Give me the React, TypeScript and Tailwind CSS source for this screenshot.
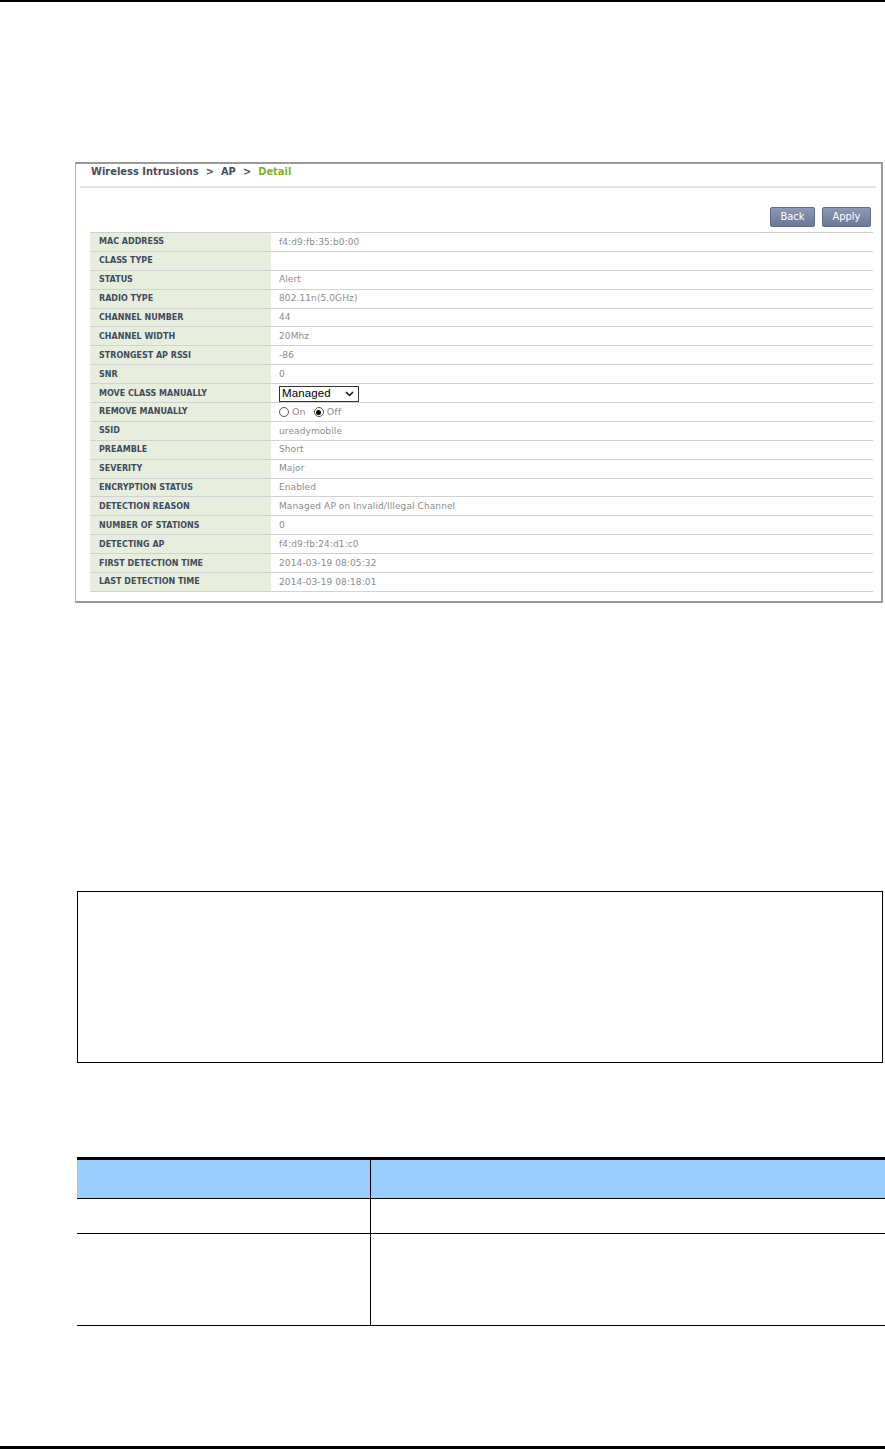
import React from 'react';

const rows: { label: string; value?: string; kind?: 'select' | 'radio' }[] = [
  { label: 'MAC ADDRESS', value: 'f4:d9:fb:35:b0:00' },
  { label: 'CLASS TYPE', value: '' },
  { label: 'STATUS', value: 'Alert' },
  { label: 'RADIO TYPE', value: '802.11n(5.0GHz)' },
  { label: 'CHANNEL NUMBER', value: '44' },
  { label: 'CHANNEL WIDTH', value: '20Mhz' },
  { label: 'STRONGEST AP RSSI', value: '-86' },
  { label: 'SNR', value: '0' },
  { label: 'MOVE CLASS MANUALLY', kind: 'select' },
  { label: 'REMOVE MANUALLY', kind: 'radio' },
  { label: 'SSID', value: 'ureadymobile' },
  { label: 'PREAMBLE', value: 'Short' },
  { label: 'SEVERITY', value: 'Major' },
  { label: 'ENCRYPTION STATUS', value: 'Enabled' },
  { label: 'DETECTION REASON', value: 'Managed AP on Invalid/Illegal Channel' },
  { label: 'NUMBER OF STATIONS', value: '0' },
  { label: 'DETECTING AP', value: 'f4:d9:fb:24:d1:c0' },
  { label: 'FIRST DETECTION TIME', value: '2014-03-19 08:05:32' },
  { label: 'LAST DETECTION TIME', value: '2014-03-19 08:18:01' },
];

function ManagedSelect() {
  return (
    <div className="flex items-center justify-between w-[80px] h-[16px] border border-[#333] bg-white pl-[2px] pr-[4px] text-[11.5px] text-black leading-none font-['Liberation_Sans',Arial,sans-serif]">
      <span>Managed</span>
      <svg width="9" height="6" viewBox="0 0 9 6">
        <polyline points="1,1 4.5,4.5 8,1" fill="none" stroke="#111" strokeWidth="1.5" />
      </svg>
    </div>
  );
}

function Radio({ checked, label }: { checked?: boolean; label: string }) {
  return (
    <span className="flex items-center gap-[3px]">
      <span className="flex items-center justify-center w-[10px] h-[10px] rounded-full border border-[#555] bg-white">
        {checked && <span className="w-[5px] h-[5px] rounded-full bg-black" />}
      </span>
      <span>{label}</span>
    </span>
  );
}

export default function App() {
  return (
    <div className="relative w-[885px] h-[1449px] bg-white overflow-hidden">
      <div className="h-[2px] bg-black" />

      {/* screenshot of the detail page */}
      <div className="mt-[160px] ml-[75px] w-[808px] border-l border-t-2 border-r-2 border-b-2 border-[#9a9a9a] border-l-[#b0b0b0]">
        <div className="h-[17px] pl-[15px] flex items-center gap-[7px] text-[11px] font-bold text-[#4b4b5c] font-['DejaVu_Sans_Condensed','DejaVu_Sans',sans-serif]">
          <span>Wireless Intrusions</span>
          <span className="text-[#555]">&gt;</span>
          <span>AP</span>
          <span className="text-[#555]">&gt;</span>
          <span className="text-[#7ab42c]">Detail</span>
        </div>
        <div className="mt-[5px] ml-[4px] mr-[5px] h-[2px] bg-[#e6e6e6]" />

        <div className="mt-[19px] pr-[10px] flex justify-end gap-[7px]">
          <button className="w-[45px] h-[20px] rounded-[2px] border border-[#5d6b88] bg-gradient-to-b from-[#8d9ab6] to-[#6b7896] text-white text-[11px] font-['DejaVu_Sans_Condensed','DejaVu_Sans',sans-serif]">
            Back
          </button>
          <button className="w-[49px] h-[20px] rounded-[2px] border border-[#5d6b88] bg-gradient-to-b from-[#8d9ab6] to-[#6b7896] text-white text-[11px] font-['DejaVu_Sans_Condensed','DejaVu_Sans',sans-serif]">
            Apply
          </button>
        </div>

        <div className="mt-[5px] ml-[14px] mr-[8px] mb-[9px] border-t border-[#cfcfcf]">
          {rows.map((r) => (
            <div key={r.label} className="flex h-[18.9px] border-b border-[#d2d2d2]">
              <div className="w-[181px] shrink-0 bg-[#e7eedd] pl-[9px] pt-[1px] flex items-center text-[8px] font-bold text-[#3f4b5e] font-['DejaVu_Sans',sans-serif]">
                {r.label}
              </div>
              <div className="flex-1 pl-[8px] pt-[1px] flex items-center text-[9px] tracking-[0.1px] text-[#8c8c8c] font-['DejaVu_Sans',sans-serif]">
                {r.kind === 'select' ? (
                  <ManagedSelect />
                ) : r.kind === 'radio' ? (
                  <div className="flex items-center gap-[8px] text-[9.5px]">
                    <Radio label="On" />
                    <Radio checked label="Off" />
                  </div>
                ) : (
                  r.value
                )}
              </div>
            </div>
          ))}
        </div>
      </div>

      {/* empty framed box */}
      <div className="mt-[288px] ml-[77px] w-[806px] h-[172px] border border-black" />

      {/* empty parameter table */}
      <div className="mt-[94px] ml-[77px] w-[808px]">
        <div className="h-[3px] bg-black" />
        <div className="flex h-[39px] bg-[#99ccff] border-b border-black">
          <div className="w-[294px] border-r border-black" />
          <div className="flex-1" />
        </div>
        <div className="flex h-[35px] border-b border-black">
          <div className="w-[294px] border-r border-black" />
          <div className="flex-1" />
        </div>
        <div className="flex h-[92px] border-b border-black">
          <div className="w-[294px] border-r border-black" />
          <div className="flex-1" />
        </div>
      </div>

      <div className="absolute left-0 right-0 bottom-0 h-[3px] bg-black" />
    </div>
  );
}
